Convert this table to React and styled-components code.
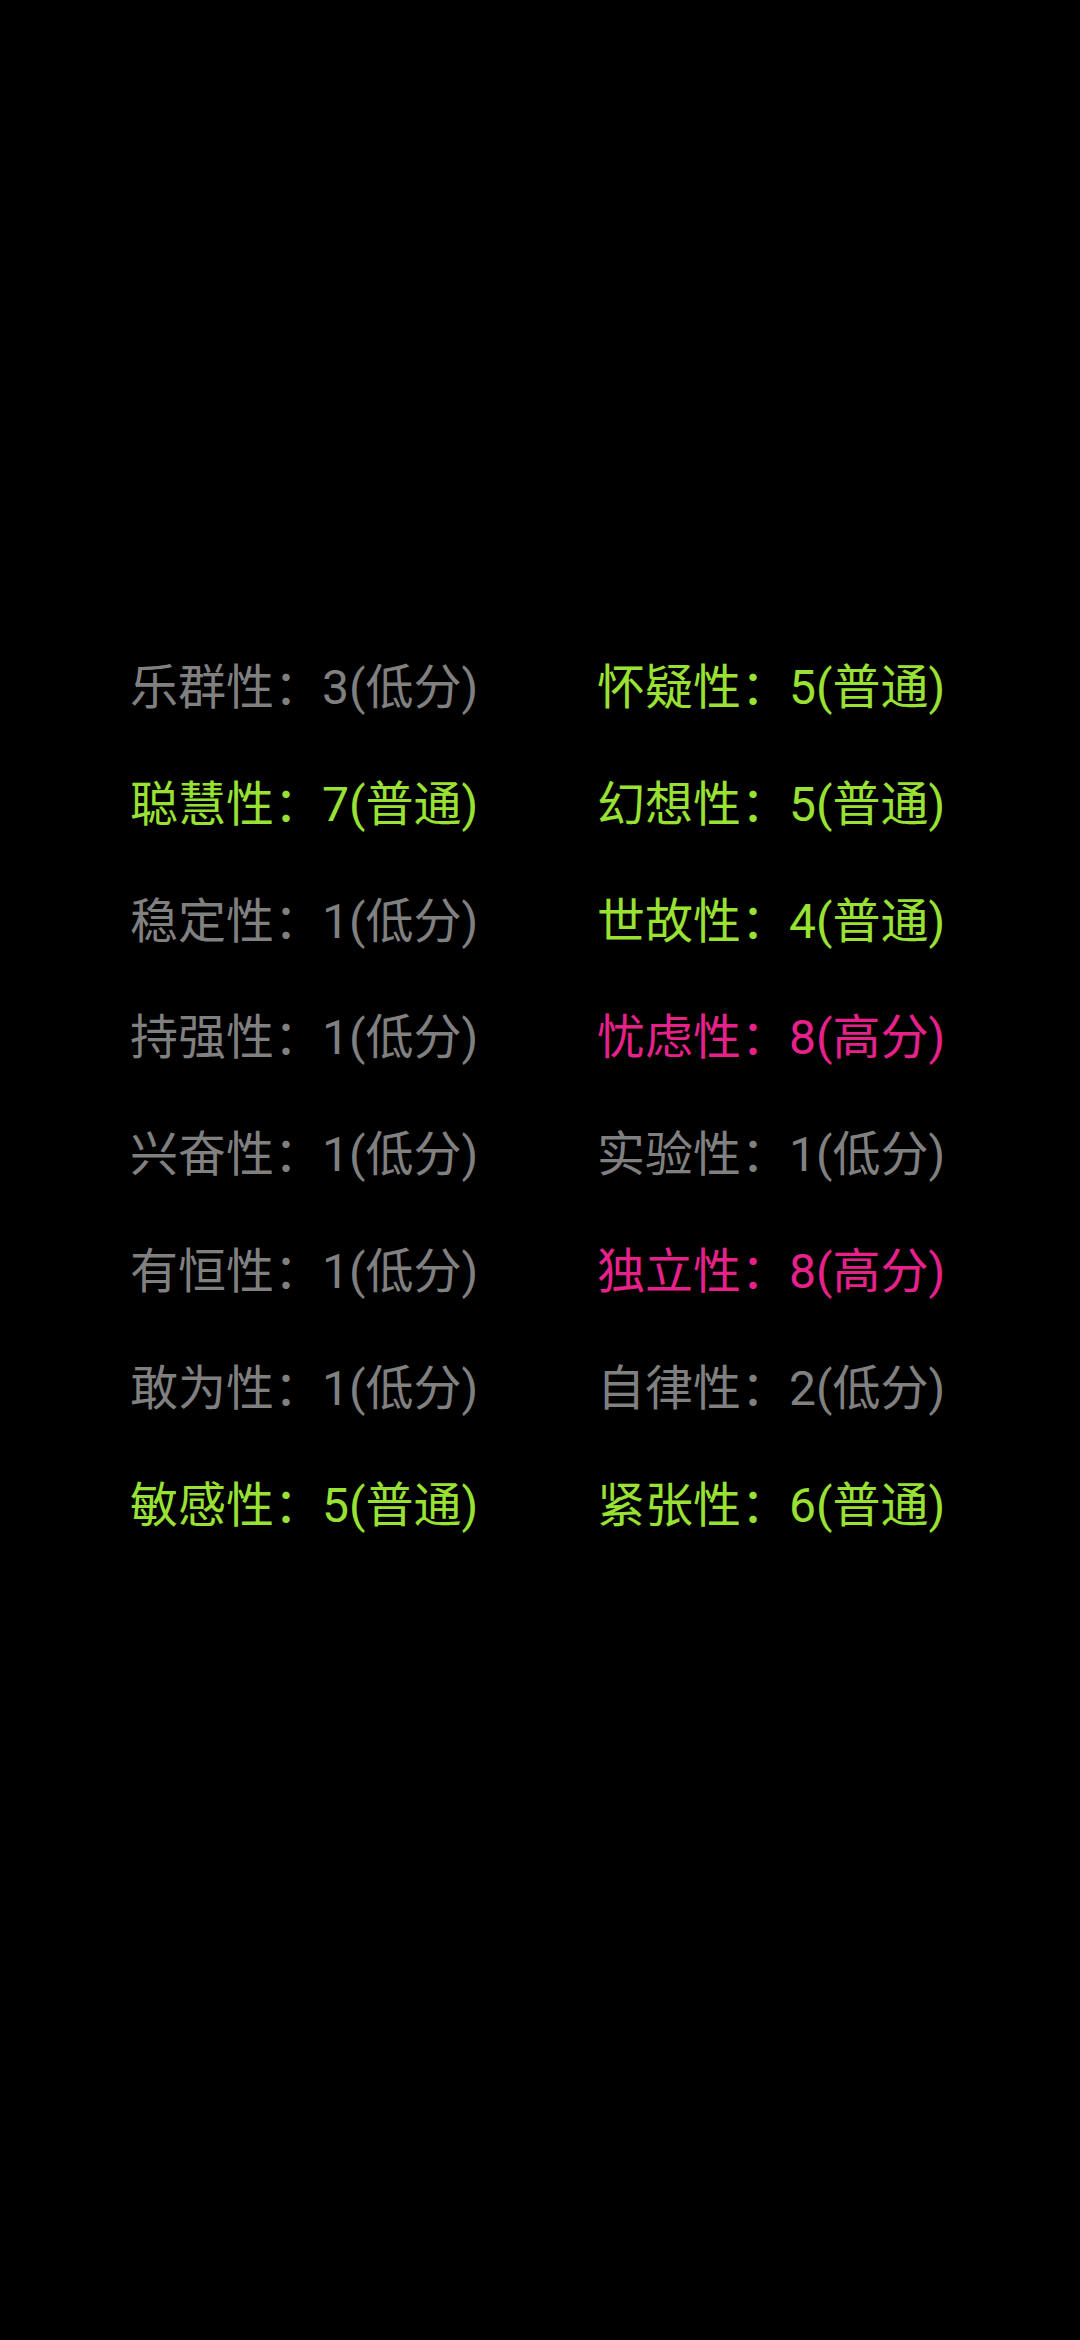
import React from "react";
import styled, { createGlobalStyle } from "styled-components";

const Global = createGlobalStyle`
  html, body { margin: 0; padding: 0; background: #000; }
  body { width: 1080px; height: 2340px; overflow: hidden; }
`;

const Screen = styled.div`
  width: 1080px;
  height: 2340px;
  background: #000;
  box-sizing: border-box;
  padding: 629px 0 0 130px;
`;

const Grid = styled.div`
  display: grid;
  grid-template-columns: 467px 380px;
  grid-auto-rows: 116.8px;
`;

const COLORS = {
  low: "#808080",
  mid: "#99e233",
  high: "#e6228a",
};

const Item = styled.div`
  font-family: Roboto, "Noto Sans CJK SC", sans-serif;
  font-size: 48px;
  line-height: 117px;
  white-space: nowrap;
  color: ${(p) => COLORS[p.$level]};
`;

const rows = [
  ["乐群性", 3, "低分", "low"],
  ["怀疑性", 5, "普通", "mid"],
  ["聪慧性", 7, "普通", "mid"],
  ["幻想性", 5, "普通", "mid"],
  ["稳定性", 1, "低分", "low"],
  ["世故性", 4, "普通", "mid"],
  ["持强性", 1, "低分", "low"],
  ["忧虑性", 8, "高分", "high"],
  ["兴奋性", 1, "低分", "low"],
  ["实验性", 1, "低分", "low"],
  ["有恒性", 1, "低分", "low"],
  ["独立性", 8, "高分", "high"],
  ["敢为性", 1, "低分", "low"],
  ["自律性", 2, "低分", "low"],
  ["敏感性", 5, "普通", "mid"],
  ["紧张性", 6, "普通", "mid"],
];

export default function App() {
  return (
    <>
      <Global />
      <Screen>
        <Grid>
          {rows.map(([name, score, label, level]) => (
            <Item key={name} $level={level}>
              {name}：{score}({label})
            </Item>
          ))}
        </Grid>
      </Screen>
    </>
  );
}
